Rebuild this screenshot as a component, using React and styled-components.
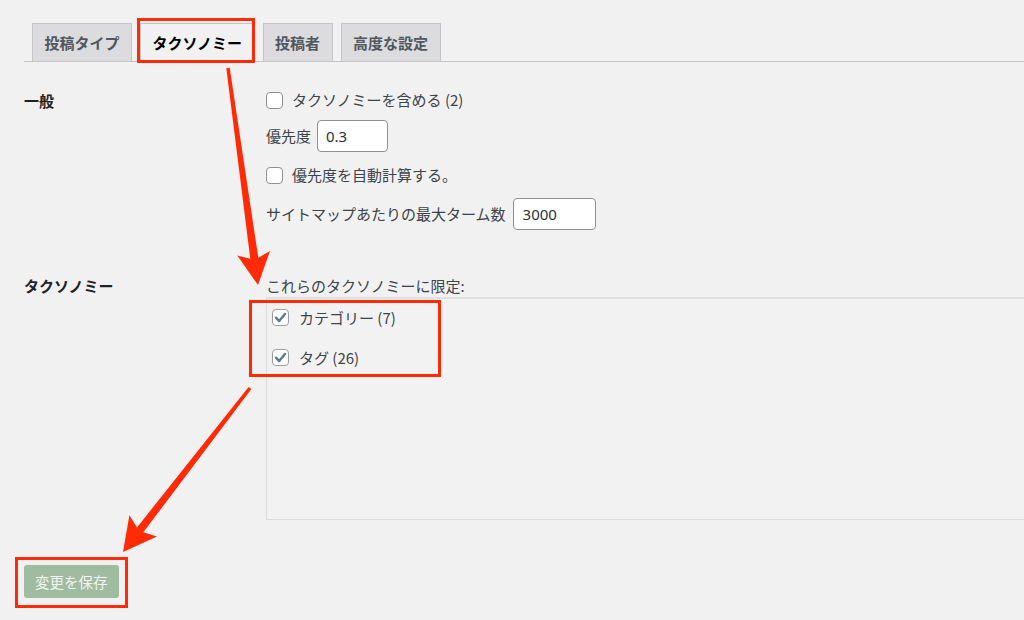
import React from "react";
import styled, { createGlobalStyle } from "styled-components";

const GlobalStyle = createGlobalStyle`
  html, body { margin: 0; padding: 0; }
  body {
    background: #f1f1f1;
    font-family: "Noto Sans CJK JP", "Noto Sans", sans-serif;
    color: #3c434a;
    overflow: hidden;
  }
  * { box-sizing: border-box; }
`;

const Page = styled.div`
  position: relative;
  width: 1024px;
  height: 620px;
  padding: 23px 0 0 24px;
  overflow: hidden;
`;

const TabNav = styled.div`
  display: flex;
  align-items: flex-end;
  gap: 8px;
  height: 39px;
  padding-left: 8px;
  border-bottom: 1px solid #c3c4c7;
`;

const Tab = styled.div`
  height: ${(p) => (p.$active ? "39px" : "38px")};
  margin-bottom: ${(p) => (p.$active ? "-1px" : "0")};
  padding: 0 11.5px;
  border: 1px solid #c3c4c7;
  border-bottom: none;
  background: ${(p) => (p.$active ? "#f1f1f1" : "#dcdcde")};
  color: ${(p) => (p.$active ? "#000" : "#50575e")};
  font-size: 15px;
  font-weight: 700;
  line-height: 37px;
  white-space: nowrap;
`;

const Form = styled.div`
  display: grid;
  grid-template-columns: 242px 1fr;
  margin-top: ${(p) => p.$top}px;
`;

const Heading = styled.div`
  font-size: 15px;
  font-weight: 700;
  color: #1d2327;
  line-height: 20px;
  padding-top: ${(p) => p.$pad || 0}px;
`;

const Fields = styled.div`
  display: flex;
  flex-direction: column;
`;

const Row = styled.div`
  display: flex;
  align-items: center;
  gap: ${(p) => p.$gap || 6}px;
  height: ${(p) => p.$h || 20}px;
  margin-top: ${(p) => p.$top || 0}px;
  font-size: 15px;
  line-height: 20px;
  white-space: nowrap;
`;

const Box = styled.span`
  display: inline-flex;
  align-items: center;
  justify-content: center;
  width: 17px;
  height: 17px;
  flex: none;
  border: 1px solid ${(p) => (p.$checked ? "#9a9ea3" : "#8c8f94")};
  border-radius: 4px;
  background: #fff;
`;

const TextInput = styled.input`
  width: ${(p) => p.$w}px;
  height: 32px;
  padding: 0 ${(p) => p.$pad}px;
  border: 1px solid #8c8f94;
  border-radius: 4px;
  background: #fff;
  font-family: "Noto Sans", "Noto Sans CJK JP", sans-serif;
  font-size: 15px;
  color: #2c3338;
  outline: none;
`;

const Caption = styled.div`
  margin-top: 46px;
  font-size: 15px;
  line-height: 20px;
  white-space: nowrap;
`;

const ListBox = styled.div`
  width: 800px;
  height: 223px;
  margin-top: 1px;
  padding: 10px 0 0 5px;
  border: 1px solid #dcdcde;
  border-top: 2px solid #e0e0e1;
  background: #f2f2f2;
  display: flex;
  flex-direction: column;
  gap: 23px;
`;

const ListItem = styled.label`
  display: flex;
  align-items: center;
  gap: 10px;
  height: 17px;
  font-size: 15px;
  line-height: 17px;
  white-space: nowrap;
`;

const SaveButton = styled.button`
  display: block;
  margin-top: 45px;
  height: 33px;
  padding: 0 11px;
  border: none;
  border-radius: 3px;
  background: #9fbba0;
  color: #f3f5f2;
  font-family: "Noto Sans CJK JP", sans-serif;
  font-size: 14.5px;
  line-height: 33px;
`;

const Overlay = styled.svg`
  position: absolute;
  left: 0;
  top: 0;
  width: 1024px;
  height: 620px;
  pointer-events: none;
`;

function Checkbox({ checked }) {
  return (
    <Box $checked={checked}>
      {checked && (
        <svg width="15" height="15" viewBox="0 0 16 16">
          <path
            d="M3.2 8.2 L6.6 11.8 L12.8 4.2"
            fill="none"
            stroke="#5b7d8b"
            strokeWidth="2.6"
            strokeLinecap="round"
            strokeLinejoin="round"
          />
        </svg>
      )}
    </Box>
  );
}

function arrowPoints(x1, y1, x2, y2, w0, w1, headLen, headW, notch) {
  const dx = x2 - x1;
  const dy = y2 - y1;
  const len = Math.hypot(dx, dy);
  const ux = dx / len;
  const uy = dy / len;
  const px = -uy;
  const py = ux;
  const bx = x2 - headLen * ux;
  const by = y2 - headLen * uy;
  const nx = x2 - (headLen - notch) * ux;
  const ny = y2 - (headLen - notch) * uy;
  const pts = [
    [x1 + (px * w0) / 2, y1 + (py * w0) / 2],
    [nx + (px * w1) / 2, ny + (py * w1) / 2],
    [bx + (px * headW) / 2, by + (py * headW) / 2],
    [x2, y2],
    [bx - (px * headW) / 2, by - (py * headW) / 2],
    [nx - (px * w1) / 2, ny - (py * w1) / 2],
    [x1 - (px * w0) / 2, y1 - (py * w0) / 2],
  ];
  return pts.map((p) => p[0].toFixed(1) + "," + p[1].toFixed(1)).join(" ");
}

const RED = "#ff2b06";

export default function App() {
  return (
    <>
      <GlobalStyle />
      <Page>
        <TabNav>
          <Tab>投稿タイプ</Tab>
          <Tab $active>タクソノミー</Tab>
          <Tab>投稿者</Tab>
          <Tab>高度な設定</Tab>
        </TabNav>

        <Form $top={28}>
          <Heading $pad={1}>一般</Heading>
          <Fields>
            <Row $gap={9}>
              <Checkbox />
              <span>タクソノミーを含める (2)</span>
            </Row>
            <Row $top={10} $h={32}>
              <span>優先度</span>
              <TextInput $w={71} $pad={8} defaultValue="0.3" />
            </Row>
            <Row $top={13} $gap={9}>
              <Checkbox />
              <span>優先度を自動計算する。</span>
            </Row>
            <Row $top={13} $h={32} $gap={7}>
              <span>サイトマップあたりの最大ターム数</span>
              <TextInput $w={83} $pad={9} defaultValue="3000" />
            </Row>
          </Fields>
        </Form>

        <Form $top={0}>
          <Heading $pad={46}>タクソノミー</Heading>
          <Fields>
            <Caption>これらのタクソノミーに限定:</Caption>
            <ListBox>
              <ListItem>
                <Checkbox checked />
                <span>カテゴリー (7)</span>
              </ListItem>
              <ListItem>
                <Checkbox checked />
                <span>タグ (26)</span>
              </ListItem>
            </ListBox>
          </Fields>
        </Form>

        <SaveButton>変更を保存</SaveButton>

        <Overlay viewBox="0 0 1024 620">
          <rect x="138.5" y="19.5" width="115" height="42" fill="none" stroke={RED} strokeWidth="3" />
          <rect x="250.5" y="301.5" width="189" height="74" fill="none" stroke={RED} strokeWidth="3" />
          <rect x="16.5" y="558.5" width="110" height="48" fill="none" stroke={RED} strokeWidth="3" />
          <polygon points={arrowPoints(228, 68, 258, 285, 3.5, 8, 32, 33, 5)} fill={RED} />
          <polygon points={arrowPoints(250, 388, 123, 552, 3.5, 8, 33, 35, 5)} fill={RED} />
        </Overlay>
      </Page>
    </>
  );
}
